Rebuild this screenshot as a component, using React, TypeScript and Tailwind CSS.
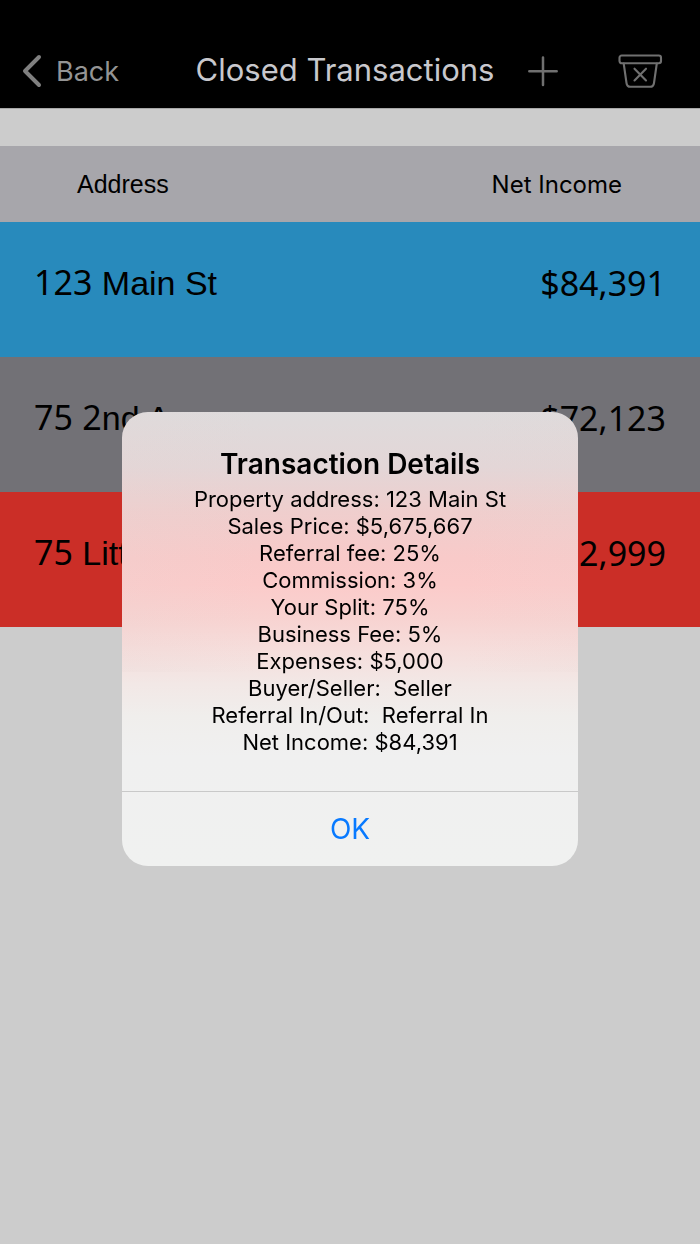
type Transaction = {
  address: string;
  income: string;
  tone: string;
};

const transactions: Transaction[] = [
  { address: "123 Main St", income: "$84,391", tone: "bg-[#288abc]" },
  { address: "75 2nd Ave", income: "$72,123", tone: "bg-[#727176]" },
  { address: "75 Little St", income: "$12,999", tone: "bg-[#cb2e27]" },
];

const details = [
  "Property address: 123 Main St",
  "Sales Price: $5,675,667",
  "Referral fee: 25%",
  "Commission: 3%",
  "Your Split: 75%",
  "Business Fee: 5%",
  "Expenses: $5,000",
  "Buyer/Seller:  Seller",
  "Referral In/Out:  Referral In",
  "Net Income: $84,391",
];

function NavBar() {
  return (
    <header className="flex h-[108px] items-end bg-black pr-9 pb-4 pl-5">
      <nav className="flex h-10 flex-1 items-center">
        <a href="#back" className="flex items-center gap-3.5 text-[27px] leading-10 text-[#949494]">
          <svg width="22" height="36" viewBox="0 0 22 36" fill="none" stroke="#808080" strokeWidth="4" strokeLinecap="round" strokeLinejoin="round" aria-hidden="true">
            <path d="M19 3 L5 17 L19 31" />
          </svg>
          Back
        </a>
      </nav>
      <h1 className="h-10 pl-1.5 text-[31px] leading-9 text-[#c8c8cd]">Closed Transactions</h1>
      <div className="flex h-10 flex-1 items-center justify-end gap-[57px]">
        <button type="button" aria-label="Add transaction">
          <svg width="32" height="32" viewBox="0 0 32 32" fill="none" stroke="#707070" strokeWidth="2.500" strokeLinecap="round" className="block">
            <path d="M16 1.500v27.400M2.300 15.200h27.400" />
          </svg>
        </button>
        <button type="button" aria-label="Delete transactions">
          <svg width="48" height="36" viewBox="0 1 48 36" fill="none" stroke="#707070" strokeWidth="2.100" strokeLinecap="round" strokeLinejoin="round" className="block">
            <rect x="3.500" y="2.500" width="41.500" height="7.800" rx="2.200" />
            <path d="M7.700 10.500 L10.500 30 Q11 33.800 14.400 33.800 H34.100 Q37.500 33.800 38 30 L40.800 10.500" />
            <path d="M18.500 15.700 L30 27.500 M30 15.700 L18.500 27.500" />
          </svg>
        </button>
      </div>
    </header>
  );
}

function Address({ text }: { text: string }) {
  return text.split(/(\d+)/).map((part, i) =>
    /\d/.test(part) ? (
      <span key={i} className="font-['Noto_Sans',sans-serif]">
        {part}
      </span>
    ) : (
      part
    ),
  );
}

function TransactionTable() {
  return (
    <table className="w-full border-collapse">
      <thead>
        <tr className="h-[76px] bg-[#a7a6ab]">
          <th scope="col" className="pt-0.5 pl-[77px] text-left font-['Liberation_Sans',sans-serif] text-[25px] font-normal">
            Address
          </th>
          <th scope="col" className="pt-0.5 pr-[78px] text-right text-[24px] font-normal">
            Net Income
          </th>
        </tr>
      </thead>
      <tbody className="text-[34px] leading-10">
        {transactions.map((t) => (
          <tr key={t.income} className={`h-[135px] ${t.tone}`}>
            <td className="pb-3.5 pl-[34px] font-['Liberation_Sans',sans-serif]">
              <Address text={t.address} />
            </td>
            <td className="pr-[34px] pb-3.5 text-right font-['Noto_Sans',sans-serif]">{t.income}</td>
          </tr>
        ))}
      </tbody>
    </table>
  );
}

function DetailsDialog() {
  return (
    <div className="fixed inset-0 flex items-center justify-center pt-[34px]">
      <section
        role="dialog"
        aria-modal="true"
        aria-labelledby="details-title"
        className="w-[456px] overflow-hidden rounded-[26px] bg-[linear-gradient(to_bottom,#dedbdc_0%,#e3d6d7_12%,#efcecd_22%,#f8cac9_32%,#fbcbca_38%,#f8d2d0_45%,#f6dddb_52%,#f2e8e6_60%,#f0eeec_67%,#f0f0f0_76%,#f0f1f0_100%)] text-center"
      >
        <div className="bg-[linear-gradient(to_right,rgba(230,214,212,0.18)_0%,transparent_30%,transparent_75%,rgba(230,214,212,0.12)_100%)] bg-[length:100%_260px] bg-no-repeat px-6 pt-8 pb-[35px]">
          <h2 id="details-title" className="text-[28px] leading-10 font-semibold">
            Transaction Details
          </h2>
          <ul className="pt-0.5 text-[22px] leading-[27px] whitespace-pre">
            {details.map((line) => (
              <li key={line}>{line}</li>
            ))}
          </ul>
        </div>
        <button type="button" className="h-[75px] w-full border-t border-[#c9c9c9] text-[28px] text-[#087aff]">
          OK
        </button>
      </section>
    </div>
  );
}

export default function App() {
  return (
    <div className="min-h-screen bg-[#cccccc] font-['Inter',sans-serif] text-black">
      <NavBar />
      <main className="border-t border-[#a8a8a8] pt-[37px]">
        <TransactionTable />
      </main>
      <DetailsDialog />
    </div>
  );
}
